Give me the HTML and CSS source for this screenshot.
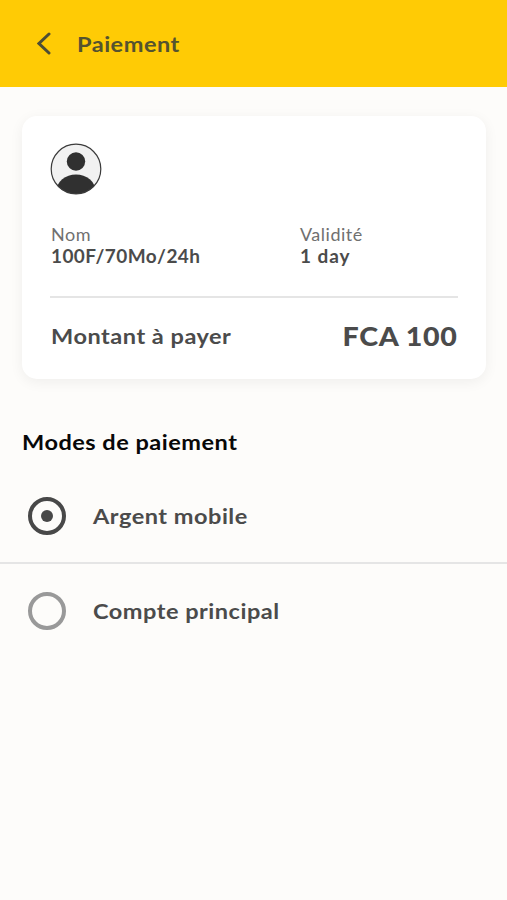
FILE: index.html
```html
<!DOCTYPE html>
<html lang="fr">
<head>
<meta charset="utf-8">
<meta name="viewport" content="width=device-width, initial-scale=1">
<title>Paiement</title>
<link rel="stylesheet" href="styles.css">
</head>
<body>
<header class="topbar">
  <svg class="back" width="14" height="24" viewBox="0 0 14 24"><path d="M12 2 2 11.5 12 21"/></svg>
  <h1 class="title wide">Paiement</h1>
</header>
<main>
  <section class="card">
    <svg class="avatar" width="52" height="52" viewBox="0 0 52 52">
      <defs><clipPath id="disc"><circle cx="26" cy="26" r="25"/></clipPath></defs>
      <circle class="avatar-bg" cx="26" cy="26" r="24.8"/>
      <g clip-path="url(#disc)"><circle cx="26" cy="18.5" r="9.2"/><ellipse cx="26" cy="48" rx="19.5" ry="16.5"/></g>
      <circle class="avatar-ring" cx="26" cy="26" r="24.8"/>
    </svg>
    <dl class="details">
      <div><dt>Nom</dt><dd class="name-value">100F/70Mo/24h</dd></div>
      <div><dt>Validité</dt><dd class="valid-value">1 day</dd></div>
    </dl>
    <div class="total">
      <span class="total-label wide">Montant à payer</span>
      <strong class="total-value">FCA 100</strong>
    </div>
  </section>
  <h2 class="heading wide">Modes de paiement</h2>
  <div class="option">
    <span class="radio selected"></span>
    <span class="wide">Argent mobile</span>
  </div>
  <div class="option">
    <span class="radio"></span>
    <span class="wide">Compte principal</span>
  </div>
</main>
</body>
</html>
```
FILE: styles.css
```css
* { box-sizing: border-box; }
body {
  margin: 0;
  min-height: 900px;
  background: #fdfcfa;
  color: #4b4b4b;
  font-family: Lato, "Liberation Sans", sans-serif;
  font-weight: 700;
}
h1, h2, dl, dd { margin: 0; }
.wide {
  font-size: 21.5px;
  line-height: 26px;
  letter-spacing: .45px;
  transform: scaleX(1.095);
  transform-origin: left center;
}
.topbar {
  display: flex;
  align-items: center;
  height: 87px;
  padding-left: 37px;
  background: #ffcb05;
}
.back { fill: none; stroke: #4e4d35; stroke-width: 3; stroke-linecap: round; }
.title { margin: 0 0 0 26px; color: #55532f; }
.card {
  height: 263px;
  margin: 29px 21px 0 22px;
  padding: 27px 28px 0 28px;
  border-radius: 15px;
  background: #fff;
  box-shadow: 0 3px 14px rgba(0, 0, 0, .06);
}
.avatar { display: block; fill: #303030; }
.avatar-bg { fill: #f1f1f1; }
.avatar-ring { fill: none; stroke: #3b3b3b; stroke-width: 1.2; }
.details {
  display: flex;
  height: 75px;
  margin-top: 28px;
  padding-left: 1px;
  border-bottom: 2px solid #e5e5e5;
  font-size: 18px;
  line-height: 22px;
}
.details > div { width: 249px; }
.details > div + div { width: auto; }
dt { color: #707070; font-weight: 400; letter-spacing: .5px; }
.name-value, .valid-value {
  letter-spacing: .4px;
  transform: scaleX(1.055);
  transform-origin: left center;
}
.valid-value { letter-spacing: .9px; }
.total {
  display: flex;
  align-items: center;
  justify-content: space-between;
  height: 75px;
}
.total-label { padding-left: 1px; }
.total-value {
  font-size: 27px;
  letter-spacing: .6px;
  transform: scaleX(1.06);
  transform-origin: right center;
}
.heading { margin: 50px 60px 0 22px; color: #080808; }
.option {
  display: flex;
  align-items: center;
  gap: 27px;
  height: 95px;
  padding-left: 28px;
}
.heading + .option {
  height: 109px;
  padding-top: 14px;
  border-bottom: 2px solid #e5e5e5;
}
.heading + .option + .option { height: 94px; }
.radio {
  display: grid;
  place-items: center;
  width: 38px;
  height: 38px;
  border: 4px solid #999;
  border-radius: 50%;
}
.selected { border-color: #484848; }
.selected::before {
  content: "";
  width: 12px;
  height: 12px;
  border-radius: 50%;
  background: #484848;
}
```
